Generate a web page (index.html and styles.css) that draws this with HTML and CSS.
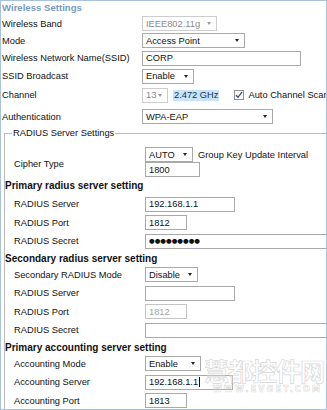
FILE: index.html
```html
<!DOCTYPE html>
<html>
<head>
<meta charset="utf-8">
<title>Wireless Settings</title>
<link rel="stylesheet" href="styles.css">
</head>
<body>
<div class="frame">
  <div class="title">Wireless Settings</div>

  <div class="row h17"><span class="label">Wireless Band</span><span class="select dis w75"><span>IEEE802.11g</span><i class="arrow"></i></span></div>
  <div class="row h17"><span class="label">Mode</span><span class="select w103"><span>Access Point</span><i class="arrow"></i></span></div>
  <div class="row h18"><span class="label">Wireless Network Name(SSID)</span><span class="input w159">CORP</span></div>
  <div class="row h18"><span class="label">SSID Broadcast</span><span class="select w52"><span>Enable</span><i class="arrow"></i></span></div>
  <div class="row h20"><span class="label">Channel</span><span class="select dis w26"><span>13</span><i class="arrow"></i></span><span class="freq">2.472 GHz</span><span class="check"><svg width="8" height="8" viewBox="0 0 8 8"><path d="M1 4.2 L3 6.3 L7 1.2" fill="none" stroke="#3a4a66" stroke-width="1.3"/></svg></span><span class="nowrap">Auto Channel Scan</span></div>
  <div class="row h23"><span class="label">Authentication</span><span class="select w131"><span>WPA-EAP</span><i class="arrow"></i></span></div>

  <fieldset class="radius">
    <legend>RADIUS Server Settings</legend>
    <div class="cipher">
      <span class="label span2">Cipher Type</span>
      <div class="cell"><span class="select w48"><span>AUTO</span><i class="arrow"></i></span><span class="gk">Group Key Update Interval</span></div>
      <div class="cell"><span class="input w55">1800</span></div>
    </div>
    <div class="heading first">Primary radius server setting</div>
    <div class="row f"><span class="label">RADIUS Server</span><span class="input w90">192.168.1.1</span></div>
    <div class="row f"><span class="label">RADIUS Port</span><span class="input w42">1812</span></div>
    <div class="row f"><span class="label">RADIUS Secret</span><span class="input wide dots">●●●●●●●●●</span></div>
    <div class="heading">Secondary radius server setting</div>
    <div class="row f"><span class="label">Secondary RADIUS Mode</span><span class="select w53"><span>Disable</span><i class="arrow"></i></span></div>
    <div class="row f"><span class="label">RADIUS Server</span><span class="input w90"></span></div>
    <div class="row f"><span class="label">RADIUS Port</span><span class="input w42 dis">1812</span></div>
    <div class="row f"><span class="label">RADIUS Secret</span><span class="input wide"></span></div>
    <div class="heading">Primary accounting server setting</div>
    <div class="row f"><span class="label">Accounting Mode</span><span class="select w56"><span>Enable</span><i class="arrow"></i></span></div>
    <div class="row f"><span class="label">Accounting Server</span><span class="input w88">192.168.1.1<i class="caret"></i></span></div>
    <div class="row f"><span class="label">Accounting Port</span><span class="input w42">1813</span></div>
  </fieldset>

  <div class="watermark">
    <div class="wm-cn">慧都控件网</div>
    <div class="wm-en">WWW.EVGET.COM</div>
  </div>
</div>
</body>
</html>
```

FILE: styles.css
```css
html, body {
  margin: 0;
  padding: 0;
  background: #fff;
}
body {
  font-family: "Liberation Sans", Arial, sans-serif;
  font-size: 9.3px;
  color: #111;
}
.frame {
  position: relative;
  width: 327px;
  height: 410px;
  box-sizing: border-box;
  border: 1px solid #a9c2dd;
  padding-left: 1px;
  overflow: hidden;
  background: #fff;
}
.title {
  height: 14px;
  line-height: 14px;
  font-weight: bold;
  font-size: 9.6px;
  color: #7b9bc0;
}
.row {
  display: flex;
  align-items: center;
  white-space: nowrap;
}
.h17 { height: 17px; }
.h18 { height: 18px; }
.h20 { height: 20px; }
.h23 { height: 23px; }
.label {
  flex: 0 0 140px;
}
.select, .input {
  box-sizing: border-box;
  height: 15px;
  border: 1px solid #a9a9a9;
  background: #fff;
  flex: 0 0 auto;
}
.select {
  display: flex;
  align-items: center;
  justify-content: space-between;
  padding: 0 5px 0 3px;
}
.input {
  display: flex;
  align-items: center;
  padding: 0 3px;
}
.arrow {
  width: 0;
  height: 0;
  border-left: 2.5px solid transparent;
  border-right: 2.5px solid transparent;
  border-top: 3px solid #222;
}
.select.dis {
  color: #8a8a8a;
  border-color: #cdcdcd;
}
.select.dis .arrow { border-top-color: #9a9a9a; }
.input.dis {
  color: #a5a5a5;
  border-color: #c4c4c4;
}
.w26 { width: 26px; }
.w42 { width: 42px; }
.w48 { width: 48px; }
.w52 { width: 52px; }
.w53 { width: 53px; }
.w55 { width: 55px; }
.w56 { width: 56px; }
.w75 { width: 75px; }
.w88 { width: 88px; }
.w90 { width: 90px; }
.w103 { width: 103px; }
.w131 { width: 131px; }
.w159 { width: 159px; }
.wide { width: 200px; }
.freq {
  margin-left: 5px;
  background: #c8e4fa;
  color: #1b2f4f;
  line-height: 11px;
  padding: 0 1px;
}
.check {
  box-sizing: border-box;
  width: 10px;
  height: 10px;
  margin-left: 15px;
  margin-right: 4px;
  border: 1px solid #8f9399;
  background: linear-gradient(#f2f2f2, #fdfdfd);
  display: flex;
  align-items: center;
  justify-content: center;
}
.nowrap { white-space: nowrap; }

.radius {
  margin: 0 0 0 2px;
  width: 400px;
  box-sizing: border-box;
  border: 1px solid #bcbcbc;
  padding: 8px 0 0 9px;
}
.radius legend {
  font-size: 9.3px;
  line-height: 11px;
  padding: 0 1px;
  margin-left: -2px;
}
.radius .label { flex: 0 0 131px; }
.cipher {
  display: grid;
  grid-template-columns: 131px auto;
  grid-template-rows: 15px 15px;
}
.span2 {
  grid-row: 1 / span 2;
  align-self: center;
  padding-top: 4px;
}
.cell {
  display: flex;
  align-items: center;
  white-space: nowrap;
}
.gk { margin-left: 5px; }
.heading {
  height: 15px;
  line-height: 15px;
  font-weight: bold;
  font-size: 10px;
  margin-left: -9px;
  white-space: nowrap;
}
.heading.first {
  height: 18px;
  line-height: 18px;
}
.row.f { height: 18.5px; }
.dots {
  font-family: "DejaVu Sans", sans-serif;
  font-size: 6.5px;
  letter-spacing: 0;
  color: #111;
}
.caret {
  display: inline-block;
  width: 1px;
  height: 10px;
  background: #111;
  margin-left: 1px;
}
.watermark {
  position: absolute;
  left: 203px;
  top: 354px;
  width: 124px;
  pointer-events: none;
}
.wm-cn {
  font-family: "Noto Sans CJK SC", sans-serif;
  font-weight: bold;
  font-size: 25px;
  line-height: 30px;
  letter-spacing: -1px;
  color: rgba(255, 255, 255, 0.3);
  -webkit-text-stroke: 0.7px rgba(185, 185, 185, 0.6);
}
.wm-en {
  font-family: "DejaVu Sans", sans-serif;
  font-weight: bold;
  font-size: 8px;
  line-height: 10px;
  letter-spacing: 2.2px;
  margin-left: 9px;
  color: rgba(255, 255, 255, 0.3);
  -webkit-text-stroke: 0.5px rgba(185, 185, 185, 0.65);
}
```
